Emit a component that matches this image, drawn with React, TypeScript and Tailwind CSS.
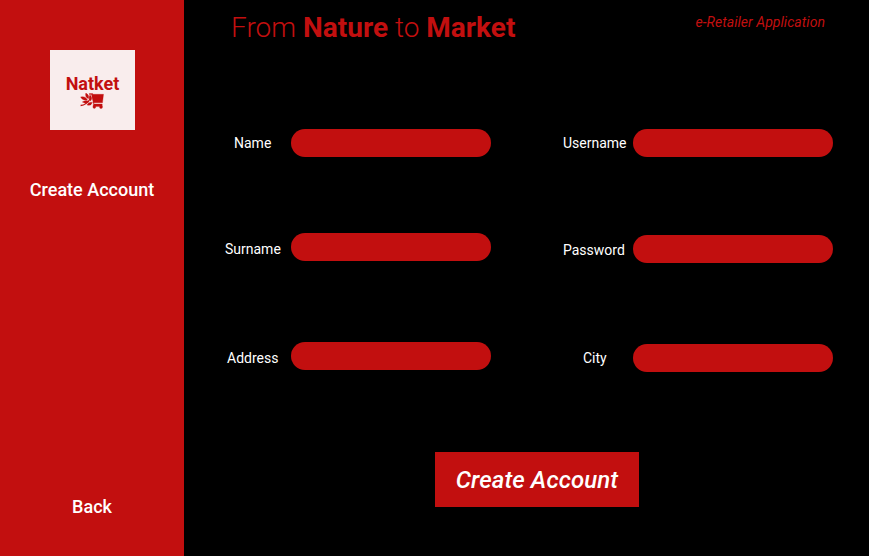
import type { ReactNode } from "react";

function Field({ label, labelClass, inputClass }: { label: string; labelClass: string; inputClass: string }) {
  return (
    <label className="flex items-start">
      <span className={`shrink-0 text-[14px] leading-4 text-white ${labelClass}`}>{label}</span>
      <input aria-label={label} className={`h-7 w-[200px] shrink-0 rounded-full bg-[#c20f0f] px-4 text-sm text-white outline-none ${inputClass}`} />
    </label>
  );
}

function Row({ children, className }: { children: ReactNode; className: string }) {
  return <div className={`flex items-start ${className}`}>{children}</div>;
}

function Mark() {
  return (
    <svg className="-mt-px mr-px" width="24" height="16" viewBox="0 0 24 16" fill="#c20f0f" stroke="#c20f0f" strokeWidth="0.3" aria-hidden="true">
      <path d="M12.300 1.300h11.200l-1 8.500h-9.200z" />
      <path d="M9.300.4h3.300l1.500 10.700h8.100v2.500h-9v-2.200h.6L11.500 1.600H9.300z" />
      <circle cx="14.300" cy="14" r="1.400" />
      <circle cx="21" cy="14" r="1.500" />
      <path d="M5.800.1q4 1.900 2.600 5.700-3.700-1.800-2.600-5.700M.6 3.900q4.600-1.200 6.800 3-4.700.9-6.800-3M10 1.900q3.200 2.800.6 6-2.700-3-.6-6M2.300 9q3.500-2.900 6.800-.4-3.100 2.900-6.800.4M7 11.900q1.400-3.500 5.400-2.500-1.200 3.800-5.400 2.500" />
      <path d="M.6 12.500C4.500 12.300 8 9.500 10.500 5.500" fill="none" strokeWidth="1.300" />
    </svg>
  );
}

export default function App() {
  return (
    <div className="flex h-[556px] w-[869px] overflow-hidden bg-black font-[Roboto,sans-serif]">
      <aside className="flex w-[184px] shrink-0 flex-col items-center bg-[#c20f0f] pt-[50px] text-white">
        <div className="ml-px flex h-20 w-[85px] flex-col items-center bg-[#f9eded] pt-[23px] text-[#c20f0f]">
          <span className="text-[18px] leading-[21px] font-bold">Natket</span>
          <Mark />
        </div>
        <h2 className="mt-[49px] text-[18px] leading-[21px] font-medium">Create Account</h2>
        <button className="mt-auto mb-[39px] text-[18px] leading-[21px] font-medium">Back</button>
      </aside>
      <main className="flex w-[685px] flex-col">
        <header className="flex h-[129px] items-start justify-between pt-[10px] pr-11 pl-[47px] text-[#c20f0f]">
          <h1 className="pt-px text-[28px] leading-[34px] font-light tracking-[0.02px]">From <b className="font-bold">Nature</b> to <b className="font-bold">Market</b></h1>
          <p className="mt-1 text-[14px] leading-4 font-normal tracking-[0.05px] italic">e-Retailer Application</p>
        </header>
        <Row className="h-[104px]">
          <Field label="Name" labelClass="w-[107px] pl-[50px] pt-[6px]" inputClass="" />
          <Field label="Username" labelClass="w-[142px] pl-[72px] pt-[6px]" inputClass="" />
        </Row>
        <Row className="h-[109px]">
          <Field label="Surname" labelClass="w-[107px] pl-[41px] pt-[8px]" inputClass="" />
          <Field label="Password" labelClass="w-[142px] pl-[72px] pt-[9px]" inputClass="mt-[2px]" />
        </Row>
        <Row className="h-[110px]">
          <Field label="Address" labelClass="w-[107px] pl-[43px] pt-[8px]" inputClass="" />
          <Field label="City" labelClass="w-[142px] pl-[92px] pt-[8px]" inputClass="mt-[2px]" />
        </Row>
        <button className="ml-[251px] h-[55px] w-[204px] bg-[#c20f0f] text-[24px] leading-7 font-medium tracking-[0.1px] text-white italic">Create Account</button>
      </main>
    </div>
  );
}
